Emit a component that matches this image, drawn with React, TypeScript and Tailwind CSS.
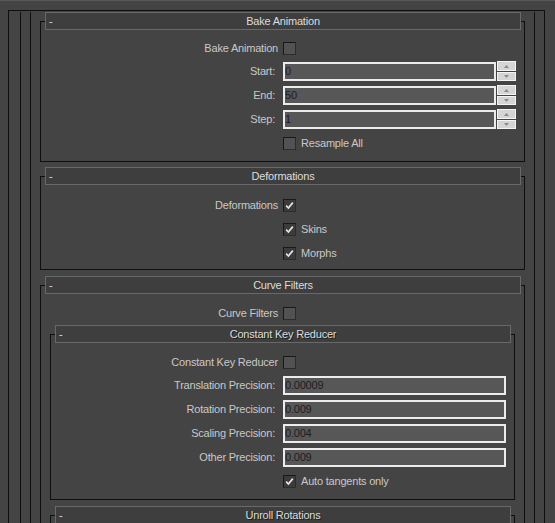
import type { ReactNode } from "react";

const Check = ({ checked = false }: { checked?: boolean }) => (
  <span
    className={`flex h-[13px] w-[13px] shrink-0 items-center justify-center border border-t-[#181818] border-l-[#181818] border-r-[#2c2c2c] border-b-[#2c2c2c] ${
      checked ? "bg-[#3b3b3b]" : "bg-[#525252]"
    }`}
  >
    {checked && (
      <svg width="9" height="9" viewBox="0 0 9 9">
        <path d="M1.2 4.6 L3.4 7 L7.8 1.6" fill="none" stroke="#e4e4e4" strokeWidth="1.7" />
      </svg>
    )}
  </span>
);

const Spinner = () => (
  <div className="ml-[1px] flex flex-col gap-px">
    <div className="flex h-[10px] w-[19px] items-center justify-center border border-[#f4f4f4] bg-[#d5d5d5]">
      <svg width="5" height="3" viewBox="0 0 5 3">
        <path d="M0 3 L2.5 0 L5 3 Z" fill="#8c8c8c" />
      </svg>
    </div>
    <div className="flex h-[9px] w-[19px] items-center justify-center border border-[#f4f4f4] bg-[#d5d5d5]">
      <svg width="5" height="3" viewBox="0 0 5 3">
        <path d="M0 0 L5 0 L2.5 3 Z" fill="#8c8c8c" />
      </svg>
    </div>
  </div>
);

const Field = ({ value, wide = false }: { value: string; wide?: boolean }) => (
  <div
    className={`flex h-[19px] items-center border-2 border-[#ececec] bg-[#575757] text-[#1d1d26] ${
      wide ? "w-[223px]" : "w-[213px]"
    }`}
  >
    {value}
  </div>
);

const Row = ({
  label,
  lw,
  h,
  field,
  children,
}: {
  label?: string;
  lw: string;
  h: string;
  field?: boolean;
  children: ReactNode;
}) => (
  <div className={`flex items-center ${h}`}>
    <div className={`${lw} shrink-0 text-right ${field ? "pr-[3px]" : ""}`}>{label}</div>
    <div className="ml-[5px] flex items-center">{children}</div>
  </div>
);

const Rollout = ({
  title,
  nested = false,
  className = "",
  children,
}: {
  title: string;
  nested?: boolean;
  className?: string;
  children?: ReactNode;
}) => (
  <div className={`mx-[9px] ${className}`}>
    <div className="relative z-10 ml-[5px] mr-[4px] grid h-[18px] grid-cols-[14px_1fr_14px] items-center border border-[#696969] bg-[#3e3e3e] text-[#dcdcdc]">
      <span className="pl-[3px] leading-none">-</span>
      <span className={`text-center ${nested ? "[text-shadow:1px_1px_0_#1c1c1c]" : ""}`}>{title}</span>
      <span />
    </div>
    <div className="-mt-[9px] border border-[#0e0e0e]">{children}</div>
  </div>
);

export default function App() {
  return (
    <div className="h-[523px] w-[555px] overflow-hidden bg-[#444444] font-['Liberation_Sans',Arial,sans-serif] text-[11px] tracking-[-0.2px] text-[#c8c8c8]">
      <div className="h-px bg-[#585858]" />
      <div className="ml-[8px] mt-[9px] w-[537px] border-l border-r border-t border-[#0e0e0e]">
        <div className="ml-[11px] mr-[9px] border-l border-r border-[#0e0e0e]">
          <div className="ml-[9px] border-l border-[#0e0e0e] pb-[60px]">
            <Rollout title="Bake Animation" className="mt-[1px]">
              <div className="pb-[5px] pt-[15px]">
                <Row label="Bake Animation" lw="w-[237px]" h="h-[22px]">
                  <Check />
                </Row>
                <Row label="Start:" lw="w-[237px]" h="h-[24px]" field>
                  <Field value="0" />
                  <Spinner />
                </Row>
                <Row label="End:" lw="w-[237px]" h="h-[24px]" field>
                  <Field value="50" />
                  <Spinner />
                </Row>
                <Row label="Step:" lw="w-[237px]" h="h-[24px]" field>
                  <Field value="1" />
                  <Spinner />
                </Row>
                <Row lw="w-[237px]" h="h-[25px]">
                  <Check />
                  <span className="ml-[5px]">Resample All</span>
                </Row>
              </div>
            </Rollout>

            <Rollout title="Deformations" className="mt-[5px]">
              <div className="pb-[4px] pt-[16px]">
                <Row label="Deformations" lw="w-[237px]" h="h-[24px]">
                  <Check checked />
                </Row>
                <Row lw="w-[237px]" h="h-[24px]">
                  <Check checked />
                  <span className="ml-[5px]">Skins</span>
                </Row>
                <Row lw="w-[237px]" h="h-[24px]">
                  <Check checked />
                  <span className="ml-[5px]">Morphs</span>
                </Row>
              </div>
            </Rollout>

            <Rollout title="Curve Filters" className="mt-[6px]">
              <div className="pt-[15px]">
                <Row label="Curve Filters" lw="w-[237px]" h="h-[24px]">
                  <Check />
                </Row>
                <Rollout title="Constant Key Reducer" nested>
                  <div className="pb-[5px] pt-[16px]">
                    <Row label="Constant Key Reducer" lw="w-[227px]" h="h-[22px]">
                      <Check />
                    </Row>
                    <Row label="Translation Precision:" lw="w-[227px]" h="h-[24px]" field>
                      <Field value="0.00009" wide />
                    </Row>
                    <Row label="Rotation Precision:" lw="w-[227px]" h="h-[24px]" field>
                      <Field value="0.009" wide />
                    </Row>
                    <Row label="Scaling Precision:" lw="w-[227px]" h="h-[24px]" field>
                      <Field value="0.004" wide />
                    </Row>
                    <Row label="Other Precision:" lw="w-[227px]" h="h-[24px]" field>
                      <Field value="0.009" wide />
                    </Row>
                    <Row lw="w-[227px]" h="h-[25px]">
                      <Check checked />
                      <span className="ml-[5px]">Auto tangents only</span>
                    </Row>
                  </div>
                </Rollout>
                <Rollout title="Unroll Rotations" nested className="mt-[6px]">
                  <div className="h-[40px]" />
                </Rollout>
              </div>
            </Rollout>
          </div>
        </div>
      </div>
    </div>
  );
}
